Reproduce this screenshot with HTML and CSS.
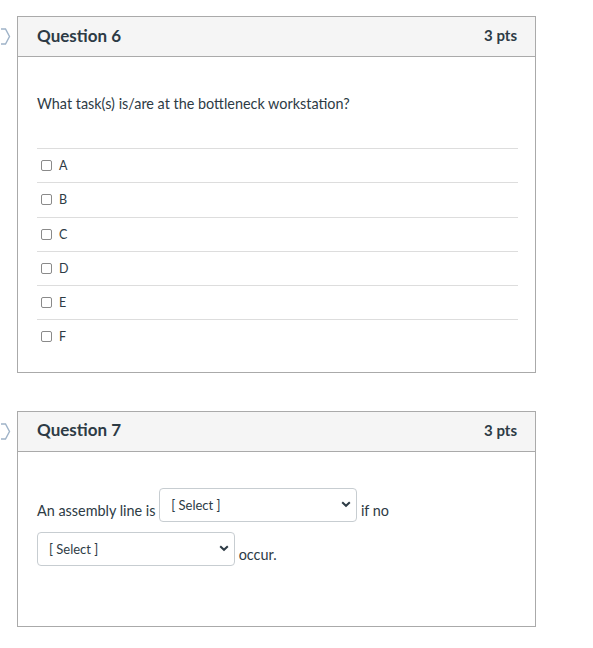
FILE: index.html
```html
<!DOCTYPE html>
<html>
<head>
<meta charset="utf-8">
<link rel="stylesheet" href="styles.css">
</head>
<body>
<div class="quiz">
  <div class="question">
    <svg class="flag" width="10" height="18" viewBox="0 0 10 18"><polyline points="0,1 4.5,1 8.5,8.5 4.5,16 0,16" fill="none" stroke="#9fb3c8" stroke-width="1.4"/></svg>
    <div class="q-header"><span class="q-title">Question 6</span><span class="q-pts">3 pts</span></div>
    <div class="q-body">
      <p class="q-text">What task(s) is/are at the bottleneck workstation?</p>
      <ul class="answers">
        <li><span class="cb"></span>A</li>
        <li><span class="cb"></span>B</li>
        <li><span class="cb"></span>C</li>
        <li><span class="cb"></span>D</li>
        <li><span class="cb"></span>E</li>
        <li><span class="cb"></span>F</li>
      </ul>
    </div>
  </div>
  <div class="question">
    <svg class="flag" width="10" height="18" viewBox="0 0 10 18"><polyline points="0,1 4.5,1 8.5,8.5 4.5,16 0,16" fill="none" stroke="#9fb3c8" stroke-width="1.4"/></svg>
    <div class="q-header"><span class="q-title">Question 7</span><span class="q-pts">3 pts</span></div>
    <div class="q-body q-body-fill">
      <p class="fill-text">An assembly line is <span class="select"><span class="sel-label">[ Select ]</span><svg class="chev" width="10" height="7" viewBox="0 0 10 7"><polyline points="1.2,1.2 5,4.8 8.8,1.2" fill="none" stroke="#2d3b45" stroke-width="2"/></svg></span> if no <span class="select"><span class="sel-label">[ Select ]</span><svg class="chev" width="10" height="7" viewBox="0 0 10 7"><polyline points="1.2,1.2 5,4.8 8.8,1.2" fill="none" stroke="#2d3b45" stroke-width="2"/></svg></span> occur.</p>
    </div>
  </div>
</div>
</body>
</html>
```
FILE: styles.css
```css
html, body {
  margin: 0;
  padding: 0;
  background: #ffffff;
}
body {
  font-family: Lato, "Liberation Sans", sans-serif;
  color: #2d3b45;
}
.quiz {
  padding: 16px 0 0 17px;
  width: 519px;
}
.question {
  position: relative;
  border: 1px solid #aaaaaa;
  margin-bottom: 38px;
}
.flag {
  position: absolute;
  left: -17px;
  top: 11px;
}
.q-header {
  display: flex;
  justify-content: space-between;
  align-items: center;
  box-sizing: border-box;
  height: 40px;
  padding: 0 18px 3px 19px;
  background: #f5f5f5;
  border-bottom: 1px solid #aaaaaa;
  font-weight: 700;
}
.q-title {
  font-size: 17px;
}
.q-pts {
  font-size: 15px;
}
.q-body {
  padding: 36px 17px 18px 19px;
}
.q-text {
  margin: 0 0 34px;
  font-size: 14.4px;
  line-height: 21px;
}
.answers {
  list-style: none;
  margin: 0;
  padding: 0;
}
.answers li {
  display: flex;
  align-items: center;
  height: 33.25px;
  border-top: 1px solid #dddddd;
  font-size: 12.5px;
}
.cb {
  width: 9px;
  height: 9px;
  border: 1px solid #8a8a8a;
  border-radius: 2px;
  margin: 0 7px 0 4px;
}
.q-body-fill {
  padding: 37px 17px 50px 19px;
}
.fill-text {
  margin: 0;
  font-size: 14.4px;
  line-height: 43px;
  margin-top: -1px;
}
.select {
  display: inline-flex;
  align-items: center;
  justify-content: space-between;
  box-sizing: border-box;
  width: 198px;
  height: 34px;
  padding: 0 5px 0 11px;
  border: 1px solid #c7cdd1;
  border-radius: 4px;
  vertical-align: 6px;
  line-height: 16px;
  font-size: 13px;
  background: #fff;
}
.chev {
  display: block;
}
```
